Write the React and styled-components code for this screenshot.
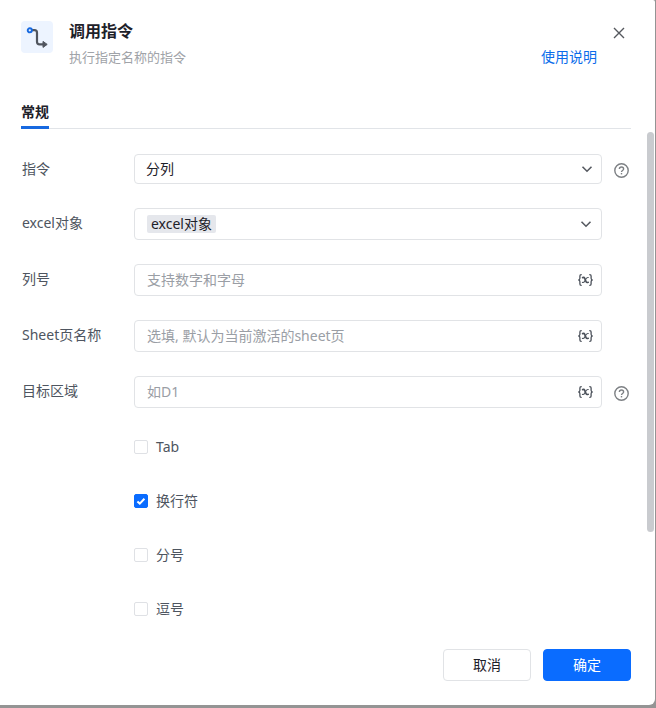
import React, { useState } from "react";
import styled, { createGlobalStyle } from "styled-components";

const GlobalStyle = createGlobalStyle`
  *, *::before, *::after { box-sizing: border-box; }
  body {
    margin: 0;
    background: #949494;
    color: #1d2129;
    font: 14px/22px "Noto Sans", "Noto Sans CJK SC", sans-serif;
  }
  button, input, select { font: inherit; color: inherit; }
`;

const Dialog = styled.main`
  display: flex;
  flex-direction: column;
  min-height: calc(100vh - 3px);
  margin: 0 1px 3px 0;
  background: #fff;
  border-radius: 0 2px 6px 0;
`;

const Header = styled.header`
  display: grid;
  grid-template-columns: 32px 1fr auto;
  column-gap: 16px;
  padding: 20px 24px 32px 21px;
`;

const AppIcon = styled.span`
  display: grid;
  width: 32px;
  height: 32px;
  margin-top: 1px;
  background: #edf4ff;
  border-radius: 4px;
`;

const Title = styled.h1`
  margin: 0;
  font-size: 16px;
  line-height: 22px;
  font-weight: 600;
  color: #1d2129;
`;

const Subtitle = styled.p`
  margin: 4px 0 0;
  font-size: 13px;
  color: #a0a3a8;
`;

const HeaderActions = styled.div`
  display: flex;
  flex-direction: column;
  align-items: flex-end;
  gap: 2px;
`;

const CloseButton = styled.button`
  display: grid;
  place-items: center;
  width: 24px;
  height: 24px;
  padding: 2px 0 0;
  border: 0;
  background: none;
  color: #55585e;
`;

const HelpLink = styled.a`
  margin-right: 34px;
  color: #0a6cea;
  text-decoration: none;
`;

const Tabs = styled.nav`
  display: flex;
  margin: 0 24px 0 21px;
  box-shadow: inset 0 -1px #e1e4e8;
`;

const Tab = styled.button`
  height: 29px;
  padding: 0 0 2px;
  border: 0;
  border-bottom: 3px solid #1769e0;
  background: none;
  font-weight: 600;
  line-height: 22px;
`;

const Body = styled.div`
  display: grid;
  grid-template-columns: 1fr 7px;
  column-gap: 16px;
  flex: 1;
  padding: 3px 1px 0 22px;
`;

const Form = styled.form`
  display: flex;
  flex-direction: column;
  gap: 24px;
  padding-top: 22px;
`;

const Rail = styled.div`
  padding-bottom: 92px;
`;

const Thumb = styled.div`
  height: 100%;
  border-radius: 4px;
  background: #c9cbcf;
`;

const Row = styled.div`
  display: grid;
  grid-template-columns: 112px 1fr 29px;
  align-items: center;
`;

const Label = styled.label`
  align-self: start;
  padding-top: 4px;
  color: #4e5560;
`;

const Control = styled.div`
  display: flex;
  align-items: center;
  justify-content: space-between;
  height: ${(p) => (p.$compact ? 30 : 32)}px;
  padding: ${(p) => (p.$compact ? "0 7px 0 11px" : "0 8px 0 12px")};
  border: 1px solid #e1e3e6;
  border-radius: 4px;
  svg { flex: none; }
`;

const Select = styled.select`
  appearance: none;
  flex: 1;
  min-width: 0;
  padding: 0;
  border: 0;
  outline: 0;
  background: none;
`;

const TagSelect = styled.select`
  appearance: none;
  field-sizing: content;
  height: 18px;
  padding: 0 4px;
  border: 0;
  border-radius: 2px;
  outline: 0;
  background: #e5e7ec;
  line-height: 18px;
`;

const TextInput = styled.input`
  flex: 1;
  min-width: 0;
  padding: 0;
  border: 0;
  outline: 0;
  background: none;
  &::placeholder { color: #9a9ea5; opacity: 1; }
`;

const IconButton = styled.button`
  display: grid;
  place-items: center;
  padding: 0;
  border: 0;
  background: none;
  color: #4c525b;
`;

const HelpButton = styled(IconButton)`
  justify-self: end;
  padding: 3px 2px 0 0;
  color: #7d8084;
`;

const CheckRow = styled.label`
  display: flex;
  align-items: center;
  gap: 8px;
  height: 30px;
  margin-left: 112px;
  color: #4e5560;
`;

const CheckBox = styled.span`
  display: grid;
  width: 14px;
  height: 14px;
  > * { grid-area: 1 / 1; }
  svg { pointer-events: none; }
`;

const CheckInput = styled.input`
  appearance: none;
  width: 14px;
  height: 14px;
  margin: 0;
  border: 1px solid #dfe1e5;
  border-radius: 2px;
  &:checked { background: #0a6cff; border-color: #0a6cff; }
`;

const Footer = styled.footer`
  display: flex;
  justify-content: flex-end;
  gap: 12px;
  padding: 25px 24px 24px;
`;

const Button = styled.button`
  width: 88px;
  height: 32px;
  padding: 0;
  border: 1px solid ${(p) => (p.$primary ? "#0a6cff" : "#e1e3e6")};
  border-radius: 4px;
  background: ${(p) => (p.$primary ? "#0a6cff" : "#fff")};
  color: ${(p) => (p.$primary ? "#fff" : "#1d2129")};
  line-height: 22px;
`;

const FlowIcon = () => (
  <svg width="32" height="32" viewBox="0 0 32 32" fill="none" aria-hidden="true">
    <path d="M11 9.2h2.5q2.5 0 2.5 2.5v9q0 2.6 2.6 2.6H22" stroke="#50555e" strokeWidth="2.2" />
    <path d="M22 20.4v6l4.2-3z" fill="#50555e" stroke="#50555e" strokeWidth="1" strokeLinejoin="round" />
    <circle cx="8.8" cy="9.3" r="2.1" fill="#e8f2ff" stroke="#1769e0" strokeWidth="1.9" />
  </svg>
);

const CloseIcon = () => (
  <svg width="12" height="12" viewBox="0 0 12 12" stroke="currentColor" strokeWidth="1.4" aria-hidden="true">
    <path d="M1 1l10 10M11 1L1 11" />
  </svg>
);

const Chevron = () => (
  <svg width="14" height="14" viewBox="0 0 14 14" fill="none" stroke="#555960" strokeWidth="1.6" aria-hidden="true">
    <path d="M2.5 4.8L7 9.2l4.5-4.4" />
  </svg>
);

const VariableIcon = () => (
  <svg width="16" height="14" viewBox="0 0 16 14" fill="none" stroke="currentColor" strokeWidth="1.3" strokeLinecap="round" aria-hidden="true">
    <path d="M4.2 1.7Q2.9 1.7 2.9 3v2.3Q2.9 6.8 1.4 7q1.5.2 1.5 1.7V11q0 1.3 1.3 1.3M12.8 1.7q1.3 0 1.3 1.3v2.3q0 1.5 1.5 1.7-1.5.2-1.5 1.7V11q0 1.3-1.3 1.3" />
    <path d="M5.6 4.6q1.6-.5 2.1.7l1.4 3.4q.5 1.2 2.1.6" strokeWidth="1.7" />
    <path d="M11.3 4.5Q9.9 4.2 9 5.8L7.7 8.2Q6.9 9.7 5.4 9.4" strokeWidth="1.1" />
  </svg>
);

const HelpIcon = () => (
  <svg width="15" height="15" viewBox="0 0 15 15" fill="none" stroke="currentColor" strokeWidth="1.4" aria-hidden="true">
    <circle cx="7.5" cy="7.5" r="6.7" />
    <path d="M5.4 6.1c0-1.3.9-2.1 2.1-2.1s2.1.8 2.1 1.9c0 1.5-2.1 1.6-2.1 3.1" />
    <path d="M7.5 10v1.4" />
  </svg>
);

const TEXT_FIELDS = [
  { id: "column", label: "列号", placeholder: "支持数字和字母" },
  { id: "sheet", label: "Sheet页名称", placeholder: "选填, 默认为当前激活的sheet页" },
  { id: "target", label: "目标区域", placeholder: "如D1", help: true },
];

const SEPARATORS = ["Tab", "换行符", "分号", "逗号"];

function Help() {
  return (
    <HelpButton type="button" aria-label="帮助">
      <HelpIcon />
    </HelpButton>
  );
}

export default function App() {
  const [checked, setChecked] = useState(["换行符"]);
  const toggle = (name) =>
    setChecked((list) => (list.includes(name) ? list.filter((n) => n !== name) : [...list, name]));

  return (
    <>
      <GlobalStyle />
      <Dialog>
        <Header>
          <AppIcon><FlowIcon /></AppIcon>
          <div>
            <Title>调用指令</Title>
            <Subtitle>执行指定名称的指令</Subtitle>
          </div>
          <HeaderActions>
            <CloseButton type="button" aria-label="关闭"><CloseIcon /></CloseButton>
            <HelpLink href="#help">使用说明</HelpLink>
          </HeaderActions>
        </Header>
        <Tabs>
          <Tab type="button">常规</Tab>
        </Tabs>
        <Body>
          <Form id="settings" onSubmit={(e) => e.preventDefault()}>
            <Row>
              <Label htmlFor="command">指令</Label>
              <Control $compact>
                <Select id="command"><option>分列</option></Select>
                <Chevron />
              </Control>
              <Help />
            </Row>
            <Row>
              <Label htmlFor="excel">excel对象</Label>
              <Control>
                <TagSelect id="excel"><option>excel对象</option></TagSelect>
                <Chevron />
              </Control>
            </Row>
            {TEXT_FIELDS.map((field) => (
              <Row key={field.id}>
                <Label htmlFor={field.id}>{field.label}</Label>
                <Control>
                  <TextInput id={field.id} type="text" placeholder={field.placeholder} />
                  <IconButton type="button" aria-label="插入变量"><VariableIcon /></IconButton>
                </Control>
                {field.help && <Help />}
              </Row>
            ))}
            {SEPARATORS.map((name) => (
              <CheckRow key={name}>
                <CheckBox>
                  <CheckInput type="checkbox" checked={checked.includes(name)} onChange={() => toggle(name)} />
                  {checked.includes(name) && (
                    <svg width="14" height="14" viewBox="0 0 14 14" fill="none" stroke="#fff" strokeWidth="2" aria-hidden="true">
                      <path d="M3.4 7.4l2.4 2.2 4.6-4.8" />
                    </svg>
                  )}
                </CheckBox>
                {name}
              </CheckRow>
            ))}
          </Form>
          <Rail><Thumb /></Rail>
        </Body>
        <Footer>
          <Button type="button">取消</Button>
          <Button type="submit" form="settings" $primary>确定</Button>
        </Footer>
      </Dialog>
    </>
  );
}
